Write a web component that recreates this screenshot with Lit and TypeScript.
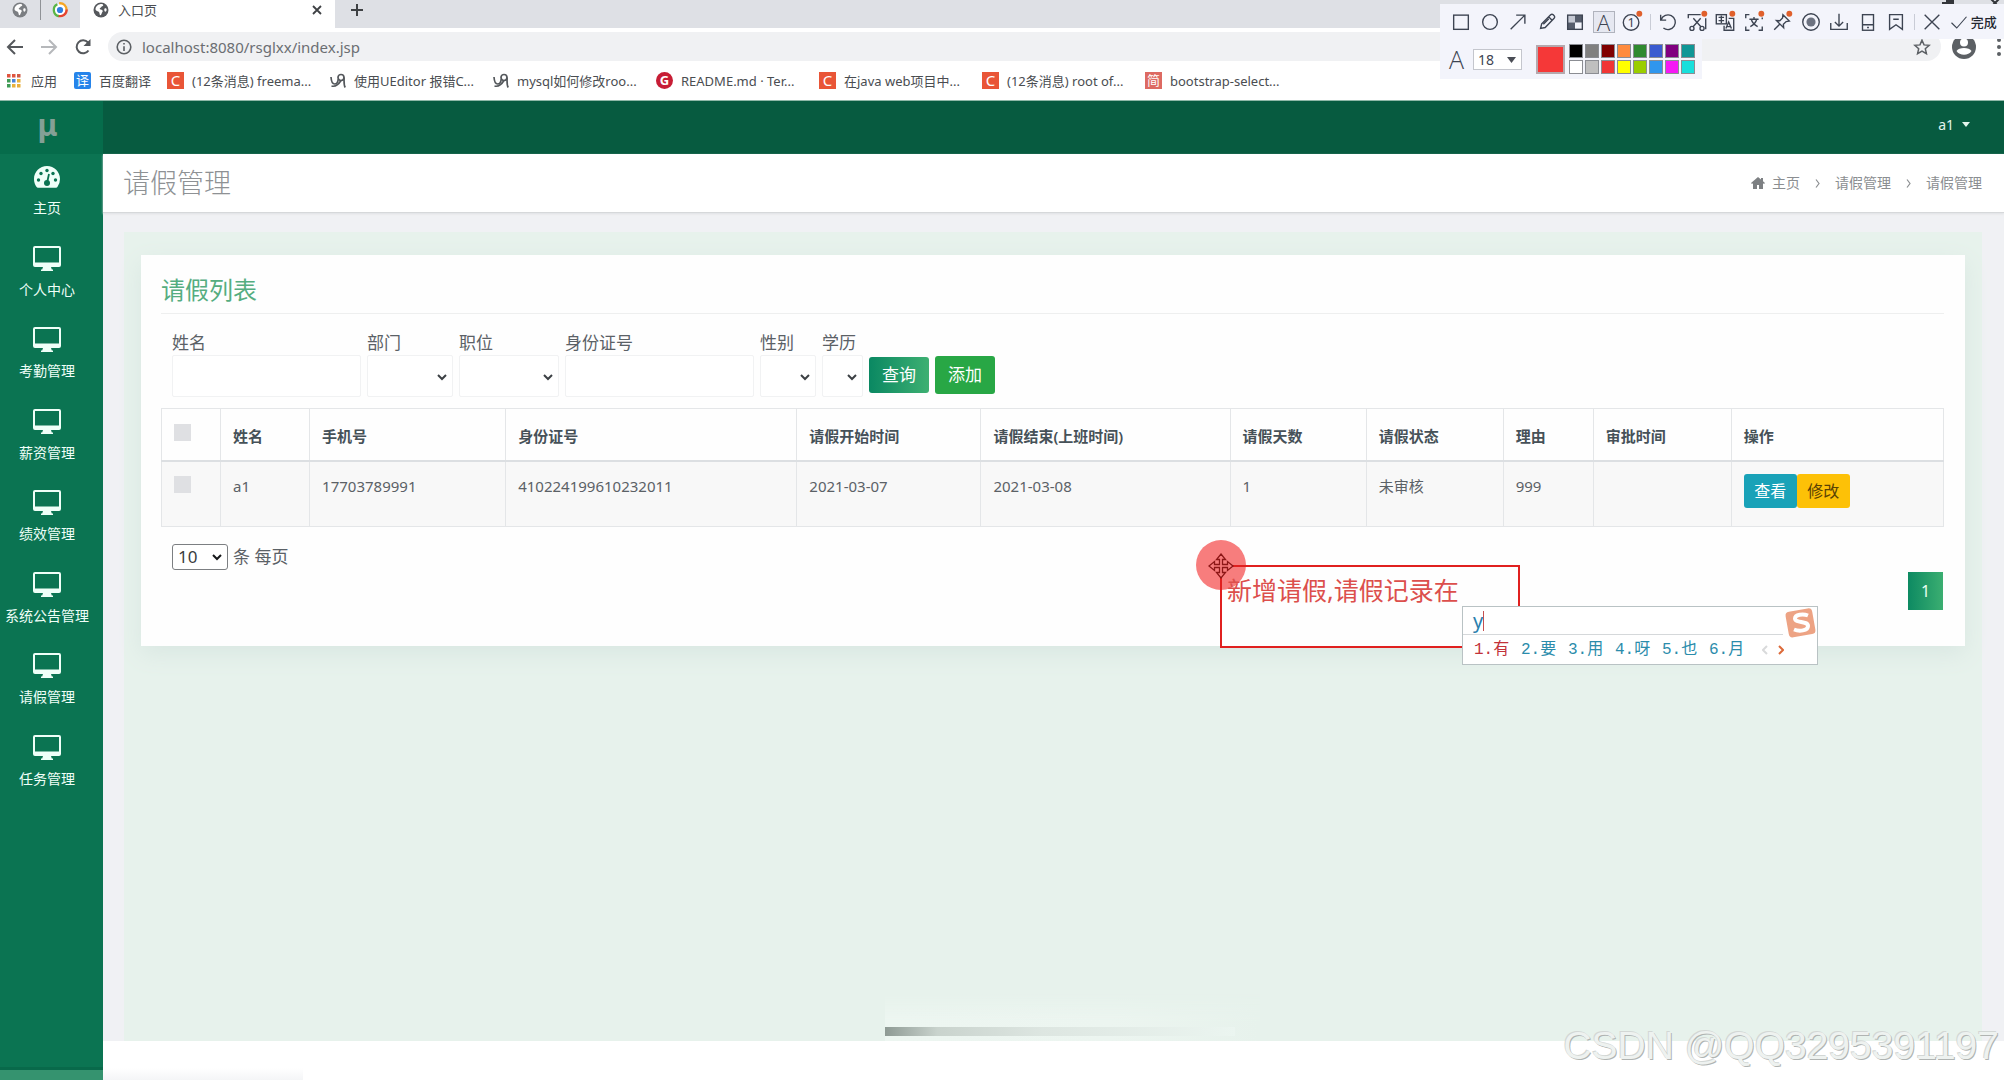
import { LitElement, html, svg, css, nothing } from "lit";
import { customElement } from "lit/decorators.js";

const line = (body: unknown, cls = "tool-svg") =>
  html`<svg class=${cls} viewBox="0 0 24 24" aria-hidden="true">${body}</svg>`;

const globe = (color: string) => html`<svg class="fav" viewBox="0 0 16 16" aria-hidden="true">
  <circle cx="8" cy="8" r="7.5" fill=${color}></circle>
  <path d="M7 2.2c2-.6 3.6.3 3.2 1.3-.4 1-1.600.6-1.900 1.600-.2 1-1.500.7-1.600 1.700 0 .9 1.900.5 2.700 1.400.9 1-.2 1.900-.6 2.800-.3.9-.4 2-1.500 2.300-.9-.6-.5-2.100-1.200-3.100-.8-1-2.400-.9-3.400-2.200C2 5.400 4 2.900 7 2.200z" fill="#fff"></path>
  <path d="M11.600 6.400c.7-.4 1.800-.3 2 .8.1 1.400-.5 2.400-1.400 2.600-.8-.5-1.400-2.700-.6-3.400z" fill="#fff"></path>
</svg>`;

const swirl = html`<svg class="fav" viewBox="0 0 18 18" aria-hidden="true">
  <circle cx="9" cy="9" r="7" fill="#fff"></circle>
  <path d="M8 1.500c5-.6 8.500 3 8.500 8" fill="none" stroke="#f6a623" stroke-width="2.600"></path>
  <path d="M16.500 8.500c0 5.500-5 8.500-10 7" fill="none" stroke="#e5452f" stroke-width="2.600"></path>
  <path d="M7.500 16C1 14 0 5.500 6 2.500" fill="none" stroke="#5ab545" stroke-width="2.600"></path>
  <circle cx="9" cy="9" r="3.500" fill="#2f7fe0"></circle>
</svg>`;

const csdn = html`<span class="badge badge-c" aria-hidden="true">C</span>`;
const loop = html`<svg class="fav" viewBox="0 0 16 16" fill="none" stroke="#54585c" stroke-width="1.700" aria-hidden="true">
  <path d="M1 4c.3 4.500 1.600 7 3.600 7 2.200 0 3.400-2.400 3.700-5"></path>
  <circle cx="11" cy="4.500" r="3"></circle>
  <path d="M14 4.500c.2 4-.4 7.500 1.200 10M1.500 13c3.500 1 7-1.500 9.500-5.500"></path>
</svg>`;

const bookmarks = [
  { icon: csdn, text: "(12条消息) freema..." },
  { icon: loop, text: "使用UEditor 报错C..." },
  { icon: loop, text: "mysql如何修改roo..." },
  { icon: html`<span class="badge badge-g" aria-hidden="true">G</span>`, text: "README.md · Ter..." },
  { icon: csdn, text: "在java web项目中..." },
  { icon: csdn, text: "(12条消息) root of..." },
  { icon: html`<span class="badge badge-j" aria-hidden="true">简</span>`, text: "bootstrap-select..." },
];

const dot = svg`<circle cx="20" cy="3" r="3.200" fill="#e0602c" stroke="none"></circle>`;

const tools: { name: string; body?: unknown; on?: boolean; sep?: boolean }[] = [
  { name: "矩形", body: svg`<rect x="4" y="4.500" width="16" height="15.500"></rect>` },
  { name: "椭圆", body: svg`<circle cx="12" cy="12" r="8"></circle>` },
  { name: "箭头", body: svg`<path d="M4 20 19.500 4.500M10 4.500h9.500V14"></path>` },
  { name: "画笔", body: svg`<path d="m5 19 1.200-5L16 4.200a2 2 0 0 1 2.800 0l1 1a2 2 0 0 1 0 2.800L10 18zM14 6.500l3.500 3.500M8 14.500l6-6"></path>` },
  { name: "马赛克", body: svg`<path d="M4 4.500h8v8H4z" fill="#c5c9d4" stroke="none"></path><path d="M12 4.500h8v8h-8z" fill="#565d6c" stroke="none"></path><path d="M4 12.500h8V20H4z" fill="#565d6c" stroke="none"></path><rect x="4" y="4.500" width="16" height="15.500"></rect>` },
  { name: "文字", on: true },
  { name: "序号", body: svg`<circle cx="11" cy="12.500" r="8.500"></circle><text x="11" y="17.500" text-anchor="middle" font-size="14" fill="#3d4452" stroke="none">1</text>${dot}` },
  { name: "", sep: true },
  { name: "撤销", body: svg`<path d="M4 4v6h6M4.500 9.500A8 8 0 1 1 7 18.500"></path>` },
  { name: "裁剪", body: svg`<path d="M2.500 8V4H16M21.500 8v12M8 8l8.500 9.500M16 8l-8.500 9.500"></path><circle cx="6.500" cy="19" r="2.200"></circle><circle cx="17.500" cy="19" r="2.200"></circle>${dot}` },
  { name: "翻译", body: svg`<rect x="2.500" y="4" width="11" height="10"></rect><path d="M5 7h6M5 10.500h6M8 5v8M16 8h5.500v13H11v-5"></path><path d="m13 19 3-7 3 7M14 17h4"></path>${dot}` },
  { name: "识别", body: svg`<path d="M3 8V4h4M3 17v4h4M21 17v4h-4M21 9V7M7 9h10M12 6.500V9M9 9c1 3.500 4 6.500 7 8M15 9c-1 3.500-4 6.500-7 8"></path>${dot}` },
  { name: "固定", body: svg`<path d="m13 4 7 7-3.500.6-3 3 .3 3.600L6 10.500l3.600.2 3-3zM10 14l-6.500 6.500"></path>${dot}` },
  { name: "录制", body: svg`<circle cx="12" cy="12" r="9"></circle><circle cx="12" cy="12" r="5" fill="#6c7280" stroke="none"></circle>` },
  { name: "保存", body: svg`<path d="M12 3v13M7.500 12l4.500 4.500 4.500-4.500M3 13v7h18v-7"></path>` },
  { name: "手机", body: svg`<rect x="6" y="4" width="12" height="17"></rect><path d="M6 15h12M11 18h2"></path>` },
  { name: "收藏", body: svg`<path d="M5 4h14v16l-7-5-7 5zM9 9h6"></path>` },
  { name: "", sep: true },
  { name: "关闭", body: svg`<path d="m4 4 16 16M20 4 4 20"></path>` },
];

const swatches = [
  "#000000", "#808080", "#800000", "#ff8b3d", "#2f8a2f", "#3a5bd0", "#800080", "#0f9696",
  "#ffffff", "#bfbfbf", "#f03535", "#ffff00", "#9acd00", "#3096ee", "#f518f5", "#18dfdc",
];

const menu = ["主页", "个人中心", "考勤管理", "薪资管理", "绩效管理", "系统公告管理", "请假管理", "任务管理"];

const gauge = html`<svg class="menu-icon" viewBox="0 0 28 26" aria-hidden="true">
  <path d="M14 2C6.800 2 1 7.800 1 15c0 3 .9 5.700 2.600 8 .3.500.8.700 1.300.700h18.200c.500 0 1-.2 1.300-.7A13 13 0 0 0 27 15C27 7.800 21.200 2 14 2z" fill="#effff8"></path>
  <g fill="#0b7452"><circle cx="5.500" cy="16" r="1.700"></circle><circle cx="8" cy="9.500" r="1.700"></circle><circle cx="14" cy="6.500" r="1.700"></circle><circle cx="20" cy="9.500" r="1.700"></circle><circle cx="22.500" cy="16" r="1.700"></circle><circle cx="14" cy="19" r="3"></circle></g>
  <path d="m14 19 2-9" stroke="#0b7452" stroke-width="1.800"></path>
</svg>`;
const monitor = html`<svg class="menu-icon" viewBox="0 0 28 26" aria-hidden="true">
  <path fill-rule="evenodd" d="M2 0h24a2 2 0 0 1 2 2v17a2 2 0 0 1-2 2h-8l.8 2.500H20V25H8v-1.500h1.200L10 21H2a2 2 0 0 1-2-2V2a2 2 0 0 1 2-2zm0 2v14.500h24V2z" fill="#effff8"></path>
</svg>`;

const columns: { title: string; width: number; value: string }[] = [
  { title: "姓名", width: 89, value: "a1" },
  { title: "手机号", width: 196, value: "17703789991" },
  { title: "身份证号", width: 291, value: "410224199610232011" },
  { title: "请假开始时间", width: 184, value: "2021-03-07" },
  { title: "请假结束(上班时间)", width: 249, value: "2021-03-08" },
  { title: "请假天数", width: 136, value: "1" },
  { title: "请假状态", width: 137, value: "未审核" },
  { title: "理由", width: 90, value: "999" },
  { title: "审批时间", width: 138, value: "" },
];

const filters = [
  { id: "name", label: "姓名", select: false },
  { id: "dept", label: "部门", select: true },
  { id: "post", label: "职位", select: true },
  { id: "idno", label: "身份证号", select: false },
  { id: "sex", label: "性别", select: true },
  { id: "edu", label: "学历", select: true },
];

@customElement("browser-bar")
class BrowserBar extends LitElement {
  static styles = css`
    :host { display: block; background: #fff; color: #4a4d51; font-size: 13px; }
    button { border: 0; padding: 0; background: none; color: inherit; font: inherit; }
    a { color: inherit; text-decoration: none; }
    .tabs { display: flex; height: 28px; background: #dee0e5; }
    .pinned { display: flex; align-items: center; width: 80px; height: 20px; }
    .pinned button { flex: 1; height: 20px; display: grid; place-items: center; }
    .pinned button + button { border-left: 1px solid #8f9296; }
    .fav { width: 16px; height: 16px; display: block; flex: none; }
    .tab { display: flex; align-items: center; gap: 9px; width: 255px; height: 28px; padding: 0 12px 8px 13px; box-sizing: border-box; background: #fff; }
    .tab-title { flex: 1; font-size: 13px; }
    .small { width: 12px; height: 12px; display: block; }
    .plus { width: 44px; height: 20px; display: grid; place-items: center; }
    .window { margin-left: auto; width: 62px; height: 12px; fill: none; stroke: #33363a; stroke-width: 2; }
    .address { display: flex; align-items: center; height: 33px; padding: 4px 2px 0 6px; box-sizing: border-box; }
    .nav { width: 18px; height: 18px; margin-right: 16px; fill: none; stroke: #55585c; stroke-width: 2; display: block; }
    .dim { stroke: #b6b8bb; }
    .pill { flex: 1; display: flex; align-items: center; height: 29px; padding: 0 10px 0 8px; border-radius: 15px; background: #f0f1f3; }
    .info { width: 16px; height: 16px; fill: none; stroke: #5c6064; stroke-width: 2; }
    .url { flex: 1; min-width: 0; border: 0; background: none; padding: 0 0 0 10px; font: 15px "Noto Sans", "Noto Sans CJK SC", sans-serif; color: #6b6e72; outline: 0; }
    .star { width: 18px; height: 18px; display: block; fill: none; stroke: #5c6064; stroke-width: 2; }
    .avatar { width: 24px; height: 24px; margin: 0 20px 0 11px; display: block; }
    .dots { width: 6px; height: 20px; fill: #5c6064; display: block; }
    .marks { display: flex; align-items: center; height: 39px; padding-left: 7px; }
    .mark { display: flex; align-items: center; gap: 8px; width: 163px; white-space: nowrap; }
    .apps { width: 67px; gap: 10px; }
    .fanyi { width: 93px; }
    .grid { width: 14px; height: 14px; display: block; }
    .badge { display: grid; place-items: center; width: 17px; height: 17px; color: #fff; line-height: 17px; font-size: 15px; flex: none; }
    .badge-c { background: #e95537; }
    .badge-g { background: #c71d35; border-radius: 9px; font-size: 13px; font-weight: 700; }
    .badge-j { background: #dd6a62; font-size: 13px; }
    .badge-y { background: #2684ea; font-size: 13px; border-radius: 2px; }
  `;

  render() {
    return html`
      <div class="tabs">
        <div class="pinned">
          <button aria-label="标签页">${globe("#7b7e82")}</button>
          <button aria-label="标签页">${swirl}</button>
        </div>
        <div class="tab">
          ${globe("#55585c")}
          <span class="tab-title">入口页</span>
          <button aria-label="关闭标签页"><svg class="small" viewBox="0 0 12 12"><path d="m2 2 8 8M10 2l-8 8" stroke="#3e4144" stroke-width="1.800"></path></svg></button>
        </div>
        <button class="plus" aria-label="新标签页"><svg class="small" viewBox="0 0 12 12"><path d="M6 0v12M0 6h12" stroke="#3e4144" stroke-width="2"></path></svg></button>
        <svg class="window" viewBox="0 0 62 12" aria-hidden="true"><path d="M1 3h8v7H1zM4 1h7v5M48-2l10 10M58-2 48 8"></path></svg>
      </div>
      <div class="address">
        <button aria-label="后退"><svg class="nav" viewBox="0 0 18 18"><path d="M17 9H2M9 2 2 9l7 7"></path></svg></button>
        <button aria-label="前进"><svg class="nav dim" viewBox="0 0 18 18"><path d="M1 9h15M9 2l7 7-7 7"></path></svg></button>
        <button aria-label="刷新"><svg class="nav" viewBox="0 0 18 18"><path d="M14.500 12.500A6.500 6.500 0 1 1 14 4.500L15.500 6"></path><path d="M16.500 1v7h-7z" fill="#55585c" stroke="none"></path></svg></button>
        <div class="pill">
          <svg class="info" viewBox="0 0 20 20"><circle cx="10" cy="10" r="8.500"></circle><path d="M10 9v6M10 5v2"></path></svg>
          <input class="url" aria-label="地址" value="localhost:8080/rsglxx/index.jsp" />
          <button aria-label="收藏"><svg class="star" viewBox="0 0 24 24"><path d="m12 3 2.700 6.200 6.800.6-5.100 4.500 1.500 6.600-5.900-3.500-5.900 3.500 1.500-6.600L2.500 9.800l6.800-.6z"></path></svg></button>
        </div>
        <button aria-label="用户"><svg class="avatar" viewBox="0 0 24 24"><circle cx="12" cy="12" r="12" fill="#5c6064"></circle><circle cx="12" cy="7.500" r="4" fill="#fff"></circle><path d="M4.500 16c2-4 13-4 15 0-3 5-12 5-15 0z" fill="#fff"></path></svg></button>
        <button aria-label="菜单"><svg class="dots" viewBox="0 0 6 20"><circle cx="3" cy="3" r="2"></circle><circle cx="3" cy="10" r="2"></circle><circle cx="3" cy="17" r="2"></circle></svg></button>
      </div>
      <nav class="marks">
        <a class="mark apps" href="#"><svg class="grid" viewBox="0 0 14 14">
          ${["#e0543f", "#e0543f", "#d05a45", "#3f9b55", "#4a83d8", "#e8b03a", "#3f9b55", "#e8b03a", "#e8b03a"].map(
            (c, i) => svg`<rect x=${(i % 3) * 5} y=${Math.floor(i / 3) * 5} width="3.500" height="3.500" fill=${c}></rect>`
          )}</svg>应用</a>
        <a class="mark fanyi" href="#"><span class="badge badge-y" aria-hidden="true">译</span>百度翻译</a>
        ${bookmarks.map((b) => html`<a class="mark" href="#">${b.icon}${b.text}</a>`)}
      </nav>
    `;
  }
}

@customElement("shot-toolbar")
class ShotToolbar extends LitElement {
  static styles = css`
    :host { display: block; color: #3d4452; }
    button { border: 0; padding: 0; background: none; color: inherit; font: inherit; }
    .row { display: flex; align-items: center; justify-content: space-between; height: 35px; padding: 0 7px 0 10px; background: #f3f4fb; }
    .tool { width: 22px; height: 22px; display: grid; place-items: center; box-sizing: border-box; }
    .tool-svg { width: 22px; height: 22px; fill: none; stroke: #3d4452; stroke-width: 1.5; overflow: visible; display: block; }
    .on { background: #e6e8f1; border: 1px solid #b0b3bd; font: 300 22px/20px "Open Sans", sans-serif; }
    .sep { width: 1px; height: 16px; background: #c9ccd6; }
    .done { display: flex; align-items: center; gap: 3px; font-size: 13px; font-weight: 500; color: #23272f; }
    .check { width: 18px; height: 18px; }
    .options { display: flex; align-items: center; width: 262px; height: 40px; padding-left: 9px; box-sizing: border-box; background: #f3f4fb; }
    .letter { width: 24px; font: 300 25px/24px "Open Sans", sans-serif; }
    .size { width: 49px; height: 21px; box-sizing: border-box; border: 1px solid #c4c6cd; border-radius: 0; padding: 0 0 0 4px; color: #3d4452; appearance: none; font: 14px "Noto Sans", sans-serif; background: #fff; }
    .pick { position: relative; display: grid; }
    .down { position: absolute; right: 6px; top: 8px; width: 9px; height: 6px; fill: #4a4d55; pointer-events: none; }
    .current { width: 29px; height: 29px; margin: 0 4px 0 14px; box-sizing: border-box; border: 2px solid #b5a9ae; background: #f53838; }
    .swatches { display: grid; grid-template-columns: repeat(8, 14px); gap: 2px; }
    .swatch { width: 14px; height: 14px; box-sizing: border-box; border: 1px solid #8b8d93; }
  `;

  render() {
    return html`
      <div class="row">
        ${tools.map((t) =>
          t.sep
            ? html`<span class="sep"></span>`
            : html`<button class="tool ${t.on ? "on" : ""}" aria-label=${t.name}>${t.on ? "A" : line(t.body)}</button>`
        )}
        <button class="done">${line(svg`<path d="m2 13 7 7L22 5"></path>`, "tool-svg check")}完成</button>
      </div>
      <div class="options">
        <span class="letter">A</span>
        <span class="pick">
          <select class="size" aria-label="字号"><option>18</option></select>
          <svg class="down" viewBox="0 0 9 6" aria-hidden="true"><path d="M0 0h9L4.500 6z"></path></svg>
        </span>
        <button class="current" aria-label="当前颜色"></button>
        <div class="swatches">
          ${swatches.map((c) => html`<button class="swatch" aria-label=${c} style="background:${c}"></button>`)}
        </div>
      </div>
    `;
  }
}

@customElement("app-root")
class AppRoot extends LitElement {
  static styles = css`
    :host { position: relative; display: flex; flex-direction: column; min-height: 100vh; overflow: hidden; background: #fff; color: #5b6166; font: 15px/24px "Noto Sans", "Noto Sans CJK SC", sans-serif; }
    button, select, input { font: inherit; }
    a { color: inherit; text-decoration: none; }
    h1, h2, ul, ol { margin: 0; padding: 0; list-style: none; }
    .shell { flex: 1; display: flex; border-top: 1px solid #8fb8a8; }
    .side { width: 103px; flex: none; background: #0b7452; color: #effff8; }
    .brand { height: 53px; padding: 0 8px 6px 0; box-sizing: border-box; display: grid; place-items: center; background: #066c4b; color: #84a096; font-size: 30px; font-weight: 700; line-height: 47px; }
    .menu { display: grid; grid-auto-rows: 1fr; height: 652px; padding-top: 1px; }
    .menu-link { display: flex; flex-direction: column; align-items: center; gap: 7px; padding: 8px 9px 0 0; font-size: 14px; line-height: 20px; white-space: nowrap; }
    .menu-icon { width: 28px; height: 28px; display: block; }
    .main { flex: 1; min-width: 0; display: flex; flex-direction: column; background: #f0f1f4; }
    .top { display: flex; justify-content: flex-end; align-items: center; height: 53px; padding: 0 34px 6px 0; box-sizing: border-box; background: #075b40; }
    .user { display: flex; align-items: center; gap: 8px; border: 0; padding: 0; background: none; color: #e3f5ec; font-size: 14px; }
    .caret { width: 8px; height: 5px; }
    .head { display: flex; justify-content: space-between; align-items: center; height: 59px; padding: 0 22px 0 20px; box-sizing: border-box; background: #fff; border-bottom: 1px solid #d6d8da; box-shadow: 0 1px 2px #dfe1e4; }
    .title { font-size: 27px; font-weight: 300; line-height: 40px; color: #8e9194; }
    .crumbs { display: flex; align-items: center; gap: 15px; font-size: 14px; color: #8b8e91; }
    .home { display: flex; align-items: center; gap: 7px; }
    .house { width: 14px; height: 12px; }
    .chev { width: 5px; height: 9px; fill: none; stroke: #8b8e91; stroke-width: 1.2; }
    .content { flex: 1; margin: 19px 22px 0 21px; padding: 23px 17px 0; background: #e7f2ec; }
    .card { padding: 20px 21px 36px 20px; background: #fefefe; box-shadow: 0 8px 22px #d9e7e2; }
    .card-title { padding-bottom: 8px; border-bottom: 1px solid #eeefef; color: #55ad80; font-size: 24px; font-weight: 400; line-height: 30px; }
    .filters { display: flex; align-items: flex-end; gap: 6px; margin: 17px 0 11px 11px; font-size: 17px; }
    .field { display: grid; white-space: nowrap; }
    .box { height: 42px; box-sizing: border-box; border: 1px solid #f1f2f3; border-radius: 2px; background: #fff; padding: 0 8px; color: #444; }
    .drop { appearance: none; }
    .pick { position: relative; display: grid; }
    .arrow { position: absolute; right: 6px; top: 19px; width: 10px; height: 7px; fill: none; stroke: #3c4044; stroke-width: 2; pointer-events: none; }
    .name, .idno { width: 189px; }
    .dept { width: 86px; }
    .post { width: 100px; }
    .sex { width: 56px; }
    .edu { width: 41px; }
    .actions { display: flex; align-items: center; gap: 6px; height: 42px; padding-bottom: 2px; box-sizing: border-box; }
    .btn { border: 0; border-radius: 3px; padding: 0 13px; height: 38px; color: #fff; font-size: 17px; line-height: 24px; background: #28a745; }
    .query { height: 36px; background: linear-gradient(90deg, #0a8862, #3eb072); }
    .table { width: 100%; table-layout: fixed; border-collapse: collapse; }
    .table th, .table td { border: 1px solid #e4e6e8; padding: 12px 12px; text-align: left; vertical-align: top; height: 66px; box-sizing: border-box; white-space: nowrap; }
    .table th { height: 52px; padding: 15px 12px 11px; border-bottom: 2px solid #dcdfe2; color: #465158; font-weight: 600; }
    .table td { background: #f8f8f8; }
    .tick { appearance: none; display: block; width: 17px; height: 17px; margin: 0; background: #dfe0e3; }
    .table td .tick { margin-top: 2px; }
    .ops { display: flex; }
    .mini { border: 0; border-radius: 3px; width: 53px; height: 34px; padding: 0; color: #fff; font-size: 16px; background: #19a2b8; }
    .edit { color: #5a4204; background: #fdc107; }
    .foot { display: flex; justify-content: space-between; height: 66px; margin: 17px 1px 0 11px; font-size: 17px; }
    .per { display: flex; align-items: center; gap: 5px; height: 26px; }
    .count { appearance: none; width: 56px; height: 26px; box-sizing: border-box; border: 1px solid #7c7f82; border-radius: 3px; background: #fff; padding: 0 0 0 5px; color: #3a3d40; line-height: 22px; }
    .per .arrow { top: 10px; stroke: #16181a; }
    .page { align-self: flex-end; display: grid; place-items: center; width: 35px; height: 38px; color: #e8fff2; background: linear-gradient(90deg, #0d8a62, #3bae71); font-size: 16px; }
    .bottom { height: 39px; background: #fff; }
    .tools { position: absolute; top: 4px; right: 0; width: 564px; }
    .spot { position: absolute; left: 1196px; top: 540px; width: 50px; height: 50px; border-radius: 50%; background: #f77d7d; }
    .note { position: absolute; left: 1220px; top: 565px; width: 300px; height: 83px; box-sizing: border-box; border: 2px solid #e0201f; padding: 7px 5px; color: #dc4f4c; font-size: 25px; line-height: 32px; white-space: nowrap; }
    .move { position: absolute; left: 1208px; top: 553px; width: 26px; height: 26px; fill: #f77d7d; stroke: #8d1717; stroke-width: 1.3; }
    .ime { position: absolute; left: 1462px; top: 606px; width: 356px; height: 59px; box-sizing: border-box; border: 1px solid #b9c2c4; background: #fff; font-family: "Liberation Mono", "Noto Sans CJK SC", monospace; }
    .typed { margin-right: 34px; height: 27px; padding-left: 10px; border-bottom: 1px solid #d5d8da; color: #2b7fae; font: 20px/28px "Noto Sans", sans-serif; display: flex; align-items: center; }
    .cursor { width: 1px; height: 20px; background: #c65050; }
    .cands { display: flex; align-items: center; gap: 12px; height: 29px; padding-left: 11px; color: #2b8cab; font-size: 16px; line-height: 30px; }
    .cands li { width: 35px; white-space: nowrap; }
    .cands .pager { display: flex; gap: 10px; width: 24px; margin-left: 6px; }
    .first { color: #c2323a; }
    .turn { width: 6px; height: 10px; fill: none; stroke: #d9dadb; stroke-width: 2; }
    .next { stroke: #dd6a3a; }
    .sogou { position: absolute; right: 0; top: 0; width: 34px; height: 32px; display: block; }
    .smear { position: absolute; left: 885px; bottom: 39px; width: 375px; height: 48px; background: linear-gradient(90deg, #edf6f1, #ecf5f0 60%, #e7f2ec); mask-image: linear-gradient(transparent, #000 60%); }
    .streak { position: absolute; left: 885px; bottom: 44px; width: 350px; height: 9px; background: linear-gradient(90deg, #8e9a94, #c9d3cd 15%, #dde6e1 45%, #ebf5f0); }
    .status { position: absolute; left: 0; bottom: 0; width: 103px; height: 10px; border-top: 3px solid #08694a; background: #35936f; }
    .haze { position: absolute; left: 103px; bottom: 0; width: 200px; height: 12px; background: linear-gradient(#fff, #f4f5f7); }
    .mark { position: absolute; right: 5px; bottom: 10px; color: #eef2f0; font: 39px/48px "Liberation Sans", sans-serif; text-shadow: 1px 1px 0 #b0b4b2, -1px -1px 0 #d3d7d5; white-space: nowrap; }
  `;

  private arrow() {
    return html`<svg class="arrow" viewBox="0 0 10 7" aria-hidden="true"><path d="m1 1 4 4 4-4"></path></svg>`;
  }

  private chev() {
    return html`<svg class="chev" viewBox="0 0 5 9" aria-hidden="true"><path d="m1 .5 3 4-3 4"></path></svg>`;
  }

  render() {
    return html`
      <browser-bar></browser-bar>
      <div class="shell">
        <aside class="side">
          <div class="brand">μ</div>
          <nav class="menu">
            ${menu.map((m, i) => html`<a class="menu-link" href="#">${i ? monitor : gauge}<span>${m}</span></a>`)}
          </nav>
        </aside>
        <main class="main">
          <header class="top">
            <button class="user">a1 <svg class="caret" viewBox="0 0 8 5"><path d="M0 0h8L4 5z" fill="#e3f5ec"></path></svg></button>
          </header>
          <div class="head">
            <h1 class="title">请假管理</h1>
            <nav class="crumbs">
              <a class="home" href="#"><svg class="house" viewBox="0 0 14 12" fill="#7d8083"><path d="M7 0 0 6l1 1 1-.8V12h4V8h2v4h4V6.200l1 .8 1-1-2-1.700V1h-2v1.500z"></path></svg>主页</a>
              ${this.chev()}<a href="#">请假管理</a>${this.chev()}<span>请假管理</span>
            </nav>
          </div>
          <div class="content">
            <section class="card">
              <h2 class="card-title">请假列表</h2>
              <form class="filters">
                ${filters.map(
                  (f) => html`<div class="field">
                    <label for=${f.id}>${f.label}</label>
                    ${f.select
                      ? html`<span class="pick"><select id=${f.id} class="box drop ${f.id}"><option></option></select>${this.arrow()}</span>`
                      : html`<input id=${f.id} class="box ${f.id}" />`}
                  </div>`
                )}
                <div class="actions">
                  <button type="button" class="btn query">查询</button>
                  <button type="button" class="btn">添加</button>
                </div>
              </form>
              <table class="table">
                <colgroup>
                  <col style="width:59px" />
                  ${columns.map((c) => html`<col style="width:${c.width}px" />`)}
                  <col style="width:212px" />
                </colgroup>
                <thead>
                  <tr>
                    <th><input class="tick" type="checkbox" aria-label="全选" /></th>
                    ${columns.map((c) => html`<th>${c.title}</th>`)}
                    <th>操作</th>
                  </tr>
                </thead>
                <tbody>
                  <tr>
                    <td><input class="tick" type="checkbox" aria-label="选择" /></td>
                    ${columns.map((c) => html`<td>${c.value || nothing}</td>`)}
                    <td><div class="ops"><button class="mini">查看</button><button class="mini edit">修改</button></div></td>
                  </tr>
                </tbody>
              </table>
              <div class="foot">
                <label class="per"><span class="pick"><select class="count"><option>10</option></select>${this.arrow()}</span>条 每页</label>
                <a class="page" href="#">1</a>
              </div>
            </section>
          </div>
          <footer class="bottom"></footer>
        </main>
      </div>

      <shot-toolbar class="tools"></shot-toolbar>

      <div class="spot"></div>
      <div class="note">新增请假,请假记录在</div>
      <svg class="move" viewBox="0 0 26 26" aria-hidden="true"><path d="M13 1l4.500 5.500h-3v5h5v-3L25 13l-5.500 4.500v-3h-5v5h3L13 25l-4.500-5.500h3v-5h-5v3L1 13l5.500-4.500v3h5v-5h-3z"></path></svg>
      <div class="ime">
        <div class="typed">y<span class="cursor"></span></div>
        <ol class="cands">
          ${["有", "要", "用", "呀", "也", "月"].map((w, i) => html`<li class=${i ? "" : "first"}>${i + 1}.${w}</li>`)}
          <li class="pager">
            <svg class="turn" viewBox="0 0 6 10"><path d="M5 1 1 5l4 4"></path></svg>
            <svg class="turn next" viewBox="0 0 6 10"><path d="m1 1 4 4-4 4"></path></svg>
          </li>
        </ol>
        <svg class="sogou" viewBox="0 0 34 32" aria-hidden="true">
          <rect x="4" y="3" width="27" height="26" rx="4" fill="#eda384" transform="rotate(-10 17 16)"></rect>
          <path d="M25 8.500c-5-2-13-1-13 3 0 5 13 2 13 7.500 0 5-9 5.500-14 3.500" fill="none" stroke="#fff" stroke-width="4"></path>
        </svg>
      </div>

      <div class="smear"></div>
      <div class="streak"></div>
      <div class="status"></div>
      <div class="haze"></div>
      <div class="mark">CSDN @QQ3295391197</div>
    `;
  }
}
